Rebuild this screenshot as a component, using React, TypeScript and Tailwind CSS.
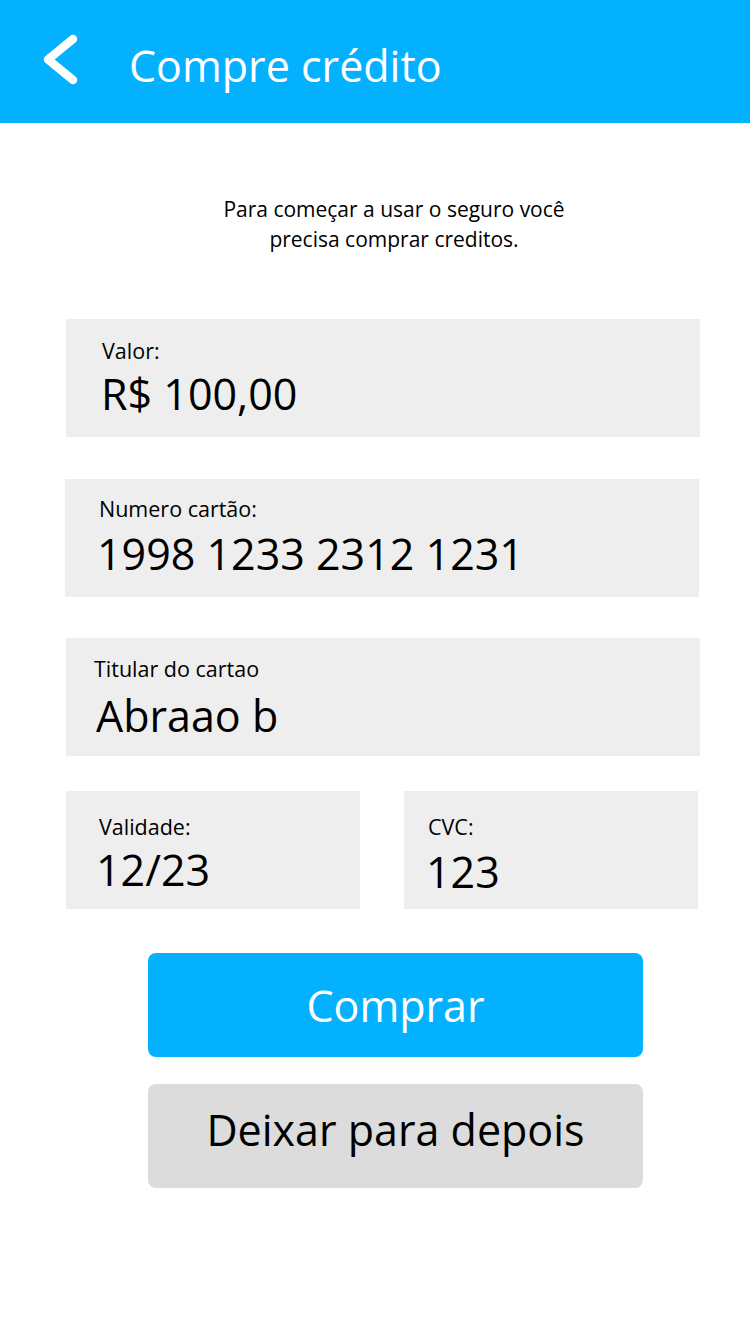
import React from 'react'

function Field({ label, value, className, valueClass }: { label: string; value: string; className: string; valueClass: string }) {
  return (
    <div className={`bg-[#eeeeee] h-[118px] flex flex-col ${className}`}>
      <div className="text-[21.5px] leading-none text-black">{label}</div>
      <div className={`text-[43px] leading-none text-black ${valueClass}`}>{value}</div>
    </div>
  )
}

export default function App() {
  return (
    <div className="w-[750px] h-[1334px] bg-white font-['Open_Sans',sans-serif] overflow-hidden">
      {/* Header */}
      <div className="h-[123px] bg-[#03b1ff] flex items-start">
        <svg className="ml-[36px] mt-[31px]" width="44" height="56" viewBox="0 0 44 56" fill="none">
          <path d="M37 8 L12 28.5 L37 49" stroke="white" strokeWidth="8.5" strokeLinecap="round" strokeLinejoin="round" />
        </svg>
        <h1 className="ml-[49px] mt-[44px] text-[43px] leading-none text-white">Compre crédito</h1>
      </div>

      <p className="mt-[71px] pl-[38px] text-center text-[21px] leading-[30px] text-black">
        Para começar a usar o seguro você
        <br />
        precisa comprar creditos.
      </p>

      <Field
        label="Valor:"
        value="R$ 100,00"
        className="mt-[65px] ml-[66px] w-[634px] pt-[21px] pl-[36px]"
        valueClass="mt-[10px] -ml-[1px]"
      />
      <Field
        label="Numero cartão:"
        value="1998 1233 2312 1231"
        className="mt-[42px] ml-[65px] w-[634px] pt-[19px] pl-[34px]"
        valueClass="mt-[12px] -ml-[2px]"
      />
      <Field
        label="Titular do cartao"
        value="Abraao b"
        className="mt-[41px] ml-[66px] w-[634px] pt-[20px] pl-[28px]"
        valueClass="mt-[14px] ml-[2px]"
      />

      <div className="mt-[35px] ml-[66px] flex gap-[44px]">
        <Field label="Validade:" value="12/23" className="w-[294px] pt-[25px] pl-[33px]" valueClass="mt-[10px] -ml-[3px]" />
        <Field label="CVC:" value="123" className="w-[294px] pt-[25px] pl-[24px]" valueClass="mt-[12px] -ml-[2px]" />
      </div>

      <div className="mt-[44px] ml-[148px] w-[495px] flex flex-col gap-[27px]">
        <button className="h-[104px] rounded-[8px] bg-[#03b1ff] text-white text-[43px] leading-none flex items-center justify-center">
          Comprar
        </button>
        <button className="h-[104px] rounded-[8px] bg-[#dcdcdc] text-black text-[43px] leading-none flex items-center justify-center pb-[14px]">
          Deixar para depois
        </button>
      </div>
    </div>
  )
}
